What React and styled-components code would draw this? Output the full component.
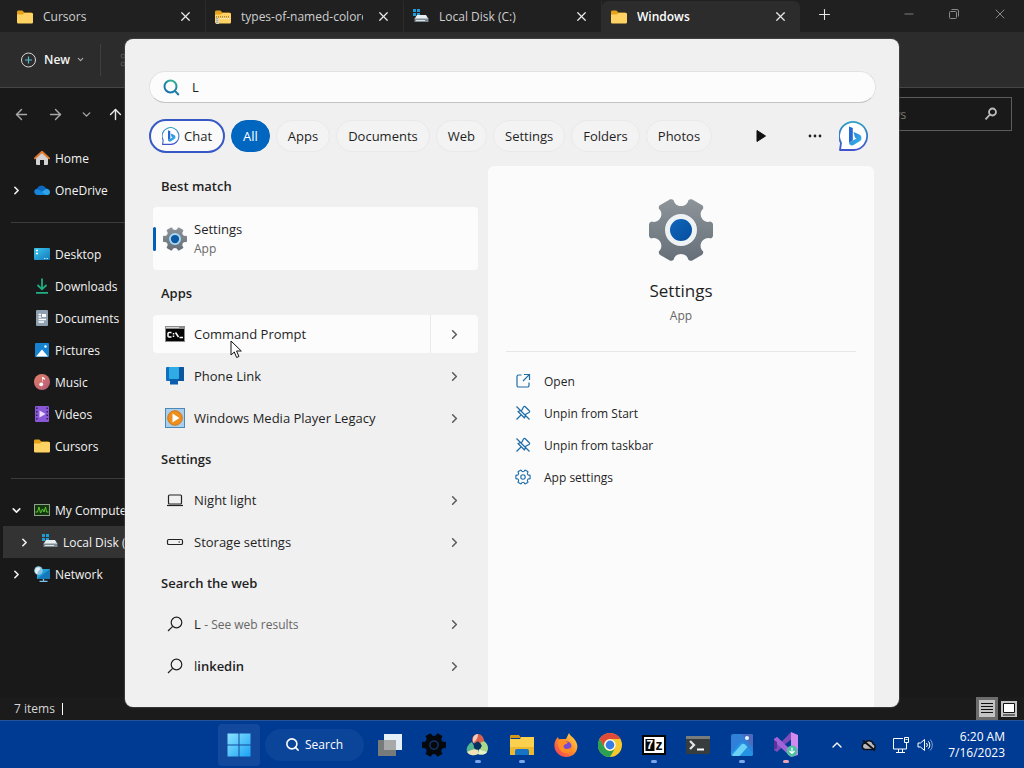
import React from 'react'
import styled, { createGlobalStyle } from 'styled-components'
import { ArrowLeft, ArrowRight, ArrowUp, ChevronDown, ChevronRight, ChevronUp, Minus, Plus, Scissors, Search, X } from 'lucide-react'


const GlobalStyle = createGlobalStyle`
    * {
        box-sizing: border-box;
    }

    body {
        margin: 0;
        background: #191919;
        font-family: 'Open Sans', 'Noto Sans', sans-serif;
        font-size: 12px;
    }

    button, input {
        font: inherit;
        color: inherit;
        border: none;
        background: none;
        padding: 0;
    }

    svg {
        display: block;
        flex-shrink: 0;
    }
`

const Desktop = styled.div`
    position: relative;
    min-height: 100vh;
    display: flex;
    flex-direction: column;
    overflow: hidden;
`

/* ---------- explorer window ---------- */

const Explorer = styled.div`
    flex: 1;
    display: flex;
    flex-direction: column;
    background: #191919;
    color: #e8e8e8;
`

const TabStrip = styled.div`
    height: 32px;
    display: flex;
    align-items: flex-start;
    padding-left: 8px;
    background: #202020;
`

const Tab = styled.div`
    width: 198px;
    height: 31px;
    margin-top: 1px;
    display: flex;
    align-items: center;
    gap: 10px;
    padding: 0 10px 0 9px;
    border-right: ${({ $active }) => ($active ? 'none' : '1px solid #2b2b2b')};
    border-radius: ${({ $active }) => ($active ? '6px 6px 0 0' : '0')};
    background: ${({ $active }) => ($active ? '#2c2c2c' : 'transparent')};
    color: ${({ $active }) => ($active ? '#ffffff' : '#cfcfcf')};
    font-weight: ${({ $active }) => ($active ? 600 : 400)};
`

const TabLabel = styled.button`
    flex: 1;
    min-width: 0;
    overflow: hidden;
    white-space: nowrap;
    text-align: left;
`

const IconButton = styled.button`
    width: ${({ $width }) => $width || 20}px;
    height: 28px;
    display: flex;
    align-items: center;
    justify-content: center;
    color: ${({ $color }) => $color || '#e8e8e8'};
`

const WindowControls = styled.div`
    display: flex;
    margin-left: auto;
`

const Toolbar = styled.div`
    height: 56px;
    display: flex;
    align-items: center;
    padding-left: 20px;
    background: #2c2c2c;
    border-bottom: 1px solid #454545;
`

const NewButton = styled.button`
    display: flex;
    align-items: center;
    gap: 6px;
    color: #f5f5f5;
    font-weight: 600;
`

const ToolDivider = styled.div`
    width: 1px;
    height: 32px;
    margin: 0 18px 0 15px;
    background: #3f3f3f;
`

const NavRow = styled.div`
    height: 52px;
    display: flex;
    align-items: center;
    gap: 8px;
    padding: 0 12px 0 8px;
`

const FolderSearch = styled.label`
    width: 216px;
    height: 34px;
    margin-left: auto;
    display: flex;
    align-items: center;
    padding: 0 13px 0 17px;
    border: 1px solid #5c5c5c;

    input {
        flex: 1;
        min-width: 0;
        outline: none;
    }

    input::placeholder {
        color: #7a7a7a;
        opacity: 1;
    }
`

const Body = styled.div`
    flex: 1;
`

const Sidebar = styled.nav`
    width: 196px;
    padding: 2px 3px;
`

const TreeItem = styled.button`
    width: 100%;
    height: 32px;
    display: flex;
    align-items: center;
    padding-left: ${({ $nested }) => ($nested ? 12 : 4)}px;
    background: ${({ $selected }) => ($selected ? '#333333' : 'transparent')};
    color: #f2f2f2;
    white-space: nowrap;
`

const TreeArrow = styled.span`
    width: 27px;
    padding-left: 3px;
    flex-shrink: 0;
`

const TreeIcon = styled.span`
    margin-right: 5px;
`

const TreeDivider = styled.hr`
    margin: 16px 0 15px 8px;
    border: none;
    border-top: 1px solid #3c3c3c;
`

const StatusBar = styled.div`
    height: 23px;
    display: flex;
    align-items: center;
    padding: 0 4px 0 14px;
    background: #1b1b1b;
    color: #d6d6d6;
`

const StatusDivider = styled.div`
    width: 1px;
    height: 12px;
    margin: 0 auto 0 7px;
    background: #ffffff;
`

const ViewButton = styled.button`
    width: 22px;
    height: 23px;
    display: flex;
    align-items: center;
    justify-content: center;
    background: ${({ $active }) => ($active ? '#6c6c6c' : 'transparent')};
`

/* ---------- start search panel ---------- */

const Panel = styled.section`
    position: absolute;
    top: 39px;
    bottom: 61px;
    left: 50%;
    width: min(774px, calc(100% - 24px));
    transform: translateX(-50%);
    display: flex;
    flex-direction: column;
    padding: 32px 25px 0 24px;
    border-radius: 8px;
    background: #f0f0f0;
    color: #1f1f1f;
    overflow: hidden;
    box-shadow: 0 0 1px 1px rgba(80, 80, 80, 0.6);
`

const SearchBox = styled.label`
    height: 32px;
    flex-shrink: 0;
    display: flex;
    align-items: center;
    gap: 12px;
    margin-right: -2px;
    padding: 0 13px;
    border: 1px solid #e2e2e2;
    border-bottom-color: #c4c4c4;
    border-radius: 16px;
    background: #fcfcfc;
    font-size: 13px;

    input {
        flex: 1;
        outline: none;
    }
`

const Filters = styled.div`
    display: flex;
    align-items: center;
    gap: 6px;
    margin-top: 16px;
`

const Pill = styled.button`
    height: 32px;
    padding: 0 11px;
    border: 1px solid #e9e9e9;
    border-radius: 16px;
    background: #f3f3f3;
    font-size: 13px;
`

const ActivePill = styled(Pill)`
    border-color: #0066bf;
    background: #0066bf;
    color: #ffffff;
`

const ChatPill = styled(Pill)`
    height: 34px;
    display: flex;
    align-items: center;
    gap: 4px;
    border: 2px solid #3759c5;
    border-radius: 17px;
    background: #fafafa;
`

const FilterTools = styled.div`
    display: flex;
    align-items: center;
    margin-left: auto;
    padding-right: 3px;
`

const Results = styled.div`
    flex: 1;
    display: grid;
    grid-template-columns: 325fr 386fr;
    gap: 10px;
    margin-top: 13px;
    padding-left: 4px;
`

const Column = styled.div`
    min-width: 0;
`

const Heading = styled.h2`
    height: 40px;
    margin: 0;
    padding-left: 8px;
    font-size: 13px;
    font-weight: 600;
    line-height: 40px;
`

const BestMatch = styled.button`
    width: 100%;
    height: 63px;
    margin: 1px 0 3px;
    display: flex;
    align-items: center;
    border-radius: 4px;
    background: #fcfcfc;
    text-align: left;
`

const Accent = styled.span`
    width: 3px;
    height: 24px;
    margin-right: 7px;
    border-radius: 2px;
    background: #005fb8;
`

const BestText = styled.span`
    display: flex;
    flex-direction: column;
    margin-left: 7px;
    font-size: 13px;
    line-height: 20px;
`

const Muted = styled.span`
    color: #666666;
    font-size: 12px;
`

const Row = styled.div`
    height: 38px;
    margin: 2px 0;
    display: flex;
    border-radius: 4px;
    background: ${({ $hover }) => ($hover ? '#fcfcfc' : 'transparent')};

    & + & {
        margin-top: 4px;
    }
`

const RowMain = styled.button`
    flex: 1;
    display: flex;
    align-items: center;
    gap: 9px;
    padding-left: 12px;
    font-size: 13px;
    text-align: left;
    white-space: nowrap;

    b {
        font-weight: 600;
    }
`

const RowMore = styled.button`
    width: 48px;
    display: flex;
    align-items: center;
    justify-content: center;
    border-left: 1px solid ${({ $hover }) => ($hover ? '#e9e9e9' : 'transparent')};
    color: #5c5c5c;
`

const Preview = styled(Column)`
    padding: 32px 18px 0;
    border-radius: 6px 6px 0 0;
    background: #fbfbfb;
    text-align: center;
`

const PreviewTitle = styled.h1`
    margin: 16px 0 1px;
    font-size: 17px;
    font-weight: 400;
    line-height: 26px;
`

const PreviewHead = styled.div`
    height: 154px;
    display: flex;
    flex-direction: column;
    align-items: center;
    border-bottom: 1px solid #e6e6e6;
    line-height: 22px;
`

const Actions = styled.div`
    padding-top: 13px;
`

const Action = styled.button`
    width: 100%;
    height: 32px;
    display: flex;
    align-items: center;
    gap: 13px;
    padding-left: 9px;
    color: #1f1f1f;

    svg {
        color: #1c6ca8;
    }
`

const Pointer = styled.svg`
    position: absolute;
    left: 230px;
    top: 340px;
`

/* ---------- taskbar ---------- */

const Taskbar = styled.footer`
    height: 48px;
    display: grid;
    grid-template-columns: 1fr auto 1fr;
    align-items: center;
    border-top: 1px solid #26549b;
    background: #003b93;
    color: #ffffff;
`

const TaskItems = styled.div`
    grid-column: 2;
    display: flex;
    align-items: center;
`

const TaskButton = styled.button`
    position: relative;
    width: 44px;
    height: 47px;
    display: flex;
    align-items: center;
    justify-content: center;

    &::after {
        content: '';
        position: absolute;
        bottom: 5px;
        width: 6px;
        height: 3px;
        border-radius: 2px;
        background: ${({ $mark }) => $mark || 'transparent'};
    }
`

const StartButton = styled.button`
    width: 42px;
    height: 42px;
    margin: 0 1px;
    display: flex;
    align-items: center;
    justify-content: center;
    border-radius: 4px;
    background: #12499c;
`

const TaskSearch = styled.button`
    width: 99px;
    height: 32px;
    margin: 0 4px;
    display: flex;
    align-items: center;
    justify-content: center;
    gap: 5px;
    border-radius: 16px;
    background: #0b459a;
`

const Tray = styled.div`
    display: flex;
    align-items: center;
    justify-content: flex-end;
    padding-right: 19px;
`

const TrayButton = styled.button`
    width: ${({ $width }) => $width || 32}px;
    display: flex;
    justify-content: center;
`

const Clock = styled.button`
    margin-left: 15px;
    text-align: right;
    line-height: 16px;
`


// six-toothed gear around (32, 32)
const gearPath = () => {
    const points = [[29.5, -8.5], [31.5, -8], [32, -6], [32, 6], [31.5, 8], [29.5, 8.5], [22, 6], [16, 16]]
    const teeth = [0, 60, 120, 180, 240, 300].map((deg) => {
        const a = (deg * Math.PI) / 180
        return points.map(([x, y]) => [
            (32 + x * Math.cos(a) - y * Math.sin(a)).toFixed(2),
            (32 + x * Math.sin(a) + y * Math.cos(a)).toFixed(2),
        ].join(' '))
    })
    return teeth.map((p, i) => {
        const next = teeth[(i + 1) % 6][0]
        return `${i === 0 ? `M${p[0]}` : ''}Q${p[1]} ${p[2]}L${p[3]}Q${p[4]} ${p[5]}C${p[6]} ${p[7]} ${next}`
    }).join('') + 'Z'
}

const GearIcon = ({ size }) => (
    <svg width={size} height={size} viewBox="0 0 64 64">
        <defs>
            <linearGradient id="gear" x1="0" y1="0" x2="0" y2="1">
                <stop offset="0" stopColor="#8d949a" />
                <stop offset="1" stopColor="#666f78" />
            </linearGradient>
            <linearGradient id="hub" x1="0" y1="0" x2="1" y2="1">
                <stop offset="0" stopColor="#0f69bd" />
                <stop offset="1" stopColor="#064b9c" />
            </linearGradient>
        </defs>
        <path d={gearPath()} fill="url(#gear)" />
        <circle cx="32" cy="32" r="13.5" fill={size > 30 ? 'url(#hub)' : '#0c58a3'} stroke={size > 30 ? '#eef2f5' : '#a9d8f5'} strokeWidth="5" />
    </svg>
)

const GearLine = () => (
    <svg width="16" height="16" viewBox="-4 -4 72 72" fill="none" stroke="currentColor" strokeWidth="5">
        <path d={gearPath()} />
        <circle cx="32" cy="32" r="10" />
    </svg>
)

const FolderIcon = ({ zip }) => (
    <svg width="16" height="16" viewBox="0 0 16 16">
        <path d="M0 3a1.4 1.4 0 0 1 1.4-1.4h4L7.3 3.4H14A1.5 1.5 0 0 1 15.5 5v4H0z" fill="#e3a21a" />
        <path d="M0 5.6h5.8l1.8-1.5H15a1 1 0 0 1 1 1v8.2a1.2 1.2 0 0 1-1.2 1.2H1.2A1.2 1.2 0 0 1 0 13.3z" fill="#ffd363" />
        {zip && (
            <>
                <path d="M1 8h14" stroke="#9a6d22" strokeWidth="1.5" strokeDasharray="1 1" />
                <path d="M1 9.5h14" stroke="#f5f1e4" strokeWidth="1.5" strokeDasharray="1 1" />
                <path d="M1 9h3v6H1z" fill="#d7d1bd" />
                <path d="M2 9v6" stroke="#777" strokeDasharray="1 1" />
            </>
        )}
    </svg>
)

const DiskIcon = () => (
    <svg width="16" height="16" viewBox="0 0 16 16">
        <path d="M0 0h3v3H0zM4 0h3v3H4zM0 4h3v3H0zM4 4h3v3H4z" fill="#1e9ad6" />
        <path d="M4 6h9l2.500 4H1.500z" fill="#e8edf0" />
        <path d="M1.500 9.500H15.500V13H1.500z" fill="#7f8b92" />
        <path d="M3 11.500h9" stroke="#d9e0e4" />
    </svg>
)

const HomeIcon = () => (
    <svg width="16" height="16" viewBox="0 0 16 16">
        <path d="M2 7.500 8 2.500l6 5V14a1 1 0 0 1-1 1h-3v-5H6v5H3a1 1 0 0 1-1-1z" fill="#d3d3d5" />
        <path d="M1 8.300 8 1.800l7 6.500" fill="none" stroke="#e0792f" strokeWidth="2" strokeLinecap="round" strokeLinejoin="round" />
    </svg>
)

const OneDriveIcon = () => (
    <svg width="16" height="16" viewBox="0 0 16 16">
        <path d="M3.300 13A3.300 3.300 0 0 1 3.200 6.500 4.900 4.900 0 0 1 12 6.200a3.500 3.500 0 0 1 .8 6.800z" fill="#0d68c0" />
        <path d="M3.300 13 11.500 7.300A3.200 3.200 0 0 1 16 10.100 2.900 2.900 0 0 1 13 13z" fill="#2ea3ea" />
        <path d="M3.300 13A3.300 3.300 0 0 1 1 7.800l2.800-.7L12 13z" fill="#1687db" />
    </svg>
)

const DesktopIcon = () => (
    <svg width="16" height="16" viewBox="0 0 16 16">
        <defs>
            <linearGradient id="desk" x2="1" y2="1">
                <stop offset="0" stopColor="#3cc8ee" />
                <stop offset="1" stopColor="#1378bb" />
            </linearGradient>
        </defs>
        <rect y="2" width="16" height="12" rx="1" fill="url(#desk)" />
        <path d="M2 4.500h2M2 7.500h2" stroke="#fff" strokeWidth="1.5" />
        <path d="M10 12.500h1.500M12.500 12.500H14" stroke="#a9e5f8" />
    </svg>
)

const DownloadIcon = () => (
    <svg width="16" height="16" viewBox="0 0 16 16" fill="none" stroke="#20ae83" strokeWidth="1.8">
        <path d="M8 .5v10.500M3.500 7 8 11.300 12.500 7M2 14.800h12" />
    </svg>
)

const DocumentIcon = () => (
    <svg width="16" height="16" viewBox="0 0 16 16">
        <rect x="2" width="12" height="16" rx="1" fill="#8fa0b1" />
        <path d="M4.500 4.500H7M4.500 7H7" stroke="#fff" strokeWidth="1.3" />
        <path d="M8 4h4v3H8z" fill="#fff" />
        <path d="M4.500 9.500H12M4.500 12H10" stroke="#fff" strokeWidth="1.3" />
    </svg>
)

const PictureIcon = () => (
    <svg width="16" height="16" viewBox="0 0 16 16">
        <rect x="1" y="1" width="14" height="14" rx="1" fill="#1583d2" />
        <path d="m2 14.500 6-7 6 7z" fill="#fff" />
        <circle cx="11.5" cy="4.5" r="1.2" fill="#fff" />
    </svg>
)

const MusicIcon = () => (
    <svg width="16" height="16" viewBox="0 0 16 16">
        <defs>
            <linearGradient id="music" y1="0" x2="1" y2="1">
                <stop offset="0" stopColor="#e58368" />
                <stop offset="1" stopColor="#b15879" />
            </linearGradient>
        </defs>
        <circle cx="8" cy="8" r="8" fill="url(#music)" />
        <path d="M8 3h1l2 1.500v1.300L9 5v5z" fill="#fff" />
        <circle cx="7.2" cy="10.3" r="1.9" fill="#fff" />
    </svg>
)

const VideoIcon = () => (
    <svg width="16" height="16" viewBox="0 0 16 16">
        <rect x="1" width="14" height="16" rx="1" fill="#8a58d6" />
        <path d="M2.800 1.500v13M13.200 1.500v13" stroke="#351d70" strokeWidth="1.5" strokeDasharray="1.5 2" />
        <path d="m5.500 4.500 6 3.500-6 3.500z" fill="#e8dcff" />
    </svg>
)

const ComputerIcon = () => (
    <svg width="16" height="16" viewBox="0 0 16 16" fill="none">
        <rect x=".5" y="2.5" width="15" height="11" fill="#13370f" stroke="#8fa08a" />
        <path d="M1.500 10h2l1.500-5 1.500 6 2-4 1.500 3 1.500-5 1 5h2" stroke="#5fc536" />
    </svg>
)

const NetworkIcon = () => (
    <svg width="16" height="16" viewBox="0 0 16 16">
        <path d="M3 3h13v10H3z" fill="#22a0dc" />
        <path d="m3 13 13-10v10z" fill="#1478b9" />
        <path d="M9.500 13V15M5.500 15.300h8" stroke="#7ec1e6" strokeWidth="1.3" />
        <circle cx="4.5" cy="4.500" r="4.3" fill="#8cc4e0" />
        <path d="M1.500 2.500 5 1l1.500 2L4 5.500 3 8.500 1 6z" fill="#e0eef5" />
    </svg>
)

const CmdIcon = () => (
    <svg width="20" height="20" viewBox="0 0 20 20">
        <path d="M0 2h20v16H0z" fill="#8c8c8c" />
        <path d="M1 5h18v12H1z" fill="#050505" />
        <path d="M1 3.500h13" stroke="#d6d6d6" />
        <path d="M6.500 8.500H4a1 1 0 0 0-1 1v2.500a1 1 0 0 0 1 1h2.500M8.500 9v1.500M8.500 11.500V13M10.500 8.500l3 4.500M14.500 13.500h3.500" fill="none" stroke="#fff" strokeWidth="1.5" />
    </svg>
)

const PhoneLinkIcon = () => (
    <svg width="20" height="20" viewBox="0 0 20 20">
        <rect x="1" y="1" width="18" height="14" rx="1" fill="#0f70bf" />
        <path d="m15 1 3 0a1 1 0 0 1 1 1v13H9z" fill="#0b579f" />
        <rect x="4" y="1" width="10" height="12" rx="1" fill="#2fabe6" />
        <path d="M5 13h8v5.500H5z" fill="#0b5eae" />
    </svg>
)

const MediaIcon = () => (
    <svg width="20" height="20" viewBox="0 0 20 20">
        <rect x=".5" y=".5" width="19" height="19" fill="#a8d0ee" stroke="#5088b5" />
        <circle cx="10" cy="10" r="7.3" fill="#ee8e1c" stroke="#d3781a" />
        <path d="M7.500 5.500 14.500 10l-7 4.500z" fill="#fff" />
    </svg>
)

const LaptopIcon = () => (
    <svg width="20" height="20" viewBox="0 0 20 20" fill="none" stroke="#222" strokeWidth="1.2">
        <rect x="3.5" y="5" width="13" height="9" rx="1" />
        <path d="M2 15.500h16" />
    </svg>
)

const StorageIcon = () => (
    <svg width="20" height="20" viewBox="0 0 20 20" fill="none" stroke="#222" strokeWidth="1.2">
        <rect x="2.5" y="7.500" width="15" height="5" rx="1.3" />
        <path d="M13.500 10H15" />
    </svg>
)

const WebSearchIcon = () => (
    <svg width="20" height="20" viewBox="0 0 20 20" fill="none" stroke="#222" strokeWidth="1.2">
        <circle cx="11.5" cy="8.500" r="5.3" />
        <path d="m7.700 12.300-4.700 4.700" />
    </svg>
)

const SearchGlyph = () => (
    <svg width="17" height="17" viewBox="0 0 17 17" fill="none" stroke="url(#lens)" strokeWidth="2">
        <defs>
            <linearGradient id="lens" gradientUnits="userSpaceOnUse" x1="13" y1="0" x2="5" y2="16">
                <stop offset="0" stopColor="#45c98c" />
                <stop offset=".4" stopColor="#1d8f9f" />
                <stop offset="1" stopColor="#1b67b2" />
            </linearGradient>
        </defs>
        <circle cx="7.5" cy="7.500" r="6" />
        <path d="m11.800 11.800 4 4.200" />
    </svg>
)

const BingIcon = ({ size }) => (
    <svg width={size} height={size} viewBox="0 0 30 30">
        <defs>
            <linearGradient id="bingRing" x1="0" y1="0" x2="0" y2="1">
                <stop offset="0" stopColor="#2e9fc4" />
                <stop offset="1" stopColor="#4252ce" />
            </linearGradient>
            <linearGradient id="bingB" x1="0" y1="0" x2="1" y2="1">
                <stop offset="0" stopColor="#2b76dd" />
                <stop offset="1" stopColor="#37bde8" />
            </linearGradient>
        </defs>
        <path d="M1 29 2 22A14 14 0 1 1 15 29z" fill="#fff" stroke="url(#bingRing)" strokeWidth="1.8" strokeLinejoin="round" />
        <path d="m10 5.500 3.800 1.600v12.500l-3.800 2.100z" fill="#2468d5" />
        <path d="m14.500 11 5.800 2.500a3.800 3.800 0 0 1 .4 6.700l-5.700 3.600a3 3 0 0 1-5-2.100l7.500-4.200-1.500-.8z" fill="url(#bingB)" />
    </svg>
)

const OpenIcon = () => (
    <svg width="16" height="16" viewBox="0 0 16 16" fill="none" stroke="currentColor" strokeWidth="1.2">
        <path d="M6.500 2h-3A1.500 1.500 0 0 0 2 3.500v9A1.500 1.500 0 0 0 3.500 14h9a1.500 1.500 0 0 0 1.500-1.500v-3M9 1.500h5.500V7M14.300 1.700 8 8" />
    </svg>
)

const UnpinIcon = () => (
    <svg width="16" height="16" viewBox="0 0 16 16" fill="none" stroke="currentColor" strokeWidth="1.2" strokeLinejoin="round">
        <path d="M10 1.500 14.500 6q.5 1-.5 1.500l-3 1.500-1.500 4-6.500-6.500 4-1.500L8.500 2q.7-1 1.500-.5zM6 10l-4.500 4.500M1.500 1.500l13 13" />
    </svg>
)

const RestoreIcon = () => (
    <svg width="10" height="10" viewBox="0 0 10 10" fill="none" stroke="currentColor">
        <rect x=".5" y="2.5" width="7" height="7" rx="1" />
        <path d="M2.500.5H8A1.500 1.500 0 0 1 9.500 2v5.500" />
    </svg>
)

const ExplorerSearchIcon = () => (
    <svg width="14" height="14" viewBox="0 0 14 14" fill="none" stroke="#bdbdbd" strokeWidth="1.8">
        <circle cx="8.5" cy="5" r="3.5" />
        <path d="m6 7.500-4.500 4.800" />
    </svg>
)

const ListViewIcon = () => (
    <svg width="16" height="17" viewBox="0 0 16 17">
        <path d="M0 0h16v17H0z" fill="#c4c4c4" />
        <path d="M2 3.500h12M2 6.500h12M2 9.500h12M2 12.500h12" stroke="#111" />
    </svg>
)

const LargeViewIcon = () => (
    <svg width="16" height="16" viewBox="0 0 16 16">
        <path d="M0 0h16v16H0z" fill="#c4c4c4" />
        <path d="M2.500 2.500h11v9h-11z" fill="#fff" stroke="#111" />
        <path d="M2 14h12" stroke="#111" />
    </svg>
)

const WindowsLogo = () => (
    <svg width="24" height="24" viewBox="0 0 24 24">
        <defs>
            <linearGradient id="win" gradientUnits="userSpaceOnUse" x1="0" y1="0" x2="24" y2="24">
                <stop offset="0" stopColor="#8ee4ff" />
                <stop offset="1" stopColor="#17a1f4" />
            </linearGradient>
        </defs>
        <path d="M.5.500h11v11H.5zM12.500.500h11v11h-11zM.5 12.500h11v11H.5zM12.500 12.500h11v11h-11z" fill="url(#win)" />
    </svg>
)

const TaskViewIcon = () => (
    <svg width="24" height="24" viewBox="0 0 24 24">
        <path d="M6 1h18v16H6z" fill="#e4eff7" />
        <path d="M0 7h18v16H0z" fill="#777b7a" />
        <path d="M6 7h12v10H6z" fill="#a7aaa9" />
    </svg>
)

const BlackGearIcon = () => (
    <svg width="24" height="24" viewBox="0 0 64 64">
        <path d={gearPath()} fill="#05080d" />
        <circle cx="32" cy="32" r="11" fill="none" stroke="#123463" strokeWidth="4" />
    </svg>
)

const PaintIcon = () => (
    <svg width="24" height="24" viewBox="0 0 24 24">
        <path d="M6 8c0-5 3-7 6-7s6 3 6 7l-4 3-2-3-3 3z" fill="#d9604c" />
        <path d="M7 5c1-3 3-4 5-4 0 3-1 6-5 9z" fill="#f0cdbc" />
        <path d="M18 8c4 3 5 7 3 11-2 3-6 3-9 2l1-5 3-3-2-3z" fill="#a9d98b" />
        <path d="M21 19c-2 3-6 3-9 2l1-5c3 2 6 2 8 3z" fill="#e8f2c9" />
        <path d="M6 9c-4 2-6 6-5 10 3 4 7 4 11 2v-5l-4-3z" fill="#57b592" />
        <path d="M1 19c3 4 7 4 11 2v-5c-4 0-8 1-11 3z" fill="#f0e2b5" />
        <circle cx="11.5" cy="13" r="3.7" fill="#07305e" />
    </svg>
)

const ExplorerIcon = () => (
    <svg width="24" height="24" viewBox="0 0 24 24">
        <path d="M0 3a1 1 0 0 1 1-1h8l2 3H1L0 8z" fill="#d49415" />
        <path d="M0 6h10l1-2h13v18H0z" fill="#fbd04f" />
        <path d="M0 14h24v8H0z" fill="#efb92f" />
        <path d="M5 22v-4a2 2 0 0 1 2-2h10a2 2 0 0 1 2 2v4z" fill="#1673c6" />
    </svg>
)

const FirefoxIcon = () => (
    <svg width="24" height="24" viewBox="0 0 24 24">
        <defs>
            <linearGradient id="fox" x1="1" y1="0" x2="0" y2="1">
                <stop offset="0" stopColor="#ffe04a" />
                <stop offset=".5" stopColor="#ff8a2a" />
                <stop offset="1" stopColor="#ef3263" />
            </linearGradient>
        </defs>
        <path d="M15 0c1 3 4 4 6 7 2 3 3 6 2 9-1 5-6 8-11 8S1 20 .5 14C0 9 2 6 4 4l1 3c1-1 3-1 4-1l3 0c1-2 2-4 3-6z" fill="url(#fox)" />
        <circle cx="12" cy="13.5" r="5.5" fill="#7a4bd0" />
        <path d="M4 7c2-2 5-1 7 1l3 1c-1 2-3 2-4 3-1 2 0 4 3 4 2 0 4-1 5-3 1 5-3 8-7 7-5-1-8-7-7-13z" fill="#ff8e25" />
    </svg>
)

const ChromeIcon = () => (
    <svg width="24" height="24" viewBox="0 0 24 24">
        <circle cx="12" cy="12" r="12" fill="#f7c92d" />
        <path d="M1.600 6A12 12 0 0 1 22.400 6H12a6 6 0 0 0-5.200 9z" fill="#e04a3a" />
        <path d="M1.600 6A12 12 0 0 0 12 24l5.200-9A6 6 0 0 1 6.800 15z" fill="#2ca152" />
        <circle cx="12" cy="12" r="5.7" fill="#fff" />
        <circle cx="12" cy="12" r="4.4" fill="#377be5" />
    </svg>
)

const SevenZipIcon = () => (
    <svg width="24" height="24" viewBox="0 0 24 24">
        <path d="M0 2h24v20H0z" fill="#050505" />
        <path d="M2 4h20v16H2z" fill="#fff" />
        <path d="M3.500 6h9v12h-9z" fill="#050505" />
        <text x="4.5" y="16" fill="#fff" fontFamily="Liberation Sans, sans-serif" fontWeight="700" fontSize="12">7</text>
        <text x="13.5" y="17" fill="#050505" fontFamily="Liberation Sans, sans-serif" fontWeight="700" fontSize="14">z</text>
    </svg>
)

const TerminalIcon = () => (
    <svg width="24" height="24" viewBox="0 0 24 24">
        <rect y="3" width="24" height="18" rx="1" fill="#373c3f" />
        <path d="M0 3h24v3H0z" fill="#777c7d" />
        <path d="m4 8 4 4-4 4" fill="none" stroke="#e5e5e5" strokeWidth="2.2" />
        <path d="M11 16.500h7" stroke="#fff" strokeWidth="2" />
    </svg>
)

const PhotosIcon = () => (
    <svg width="24" height="24" viewBox="0 0 24 24">
        <rect x="1" y="1" width="22" height="22" rx="2" fill="#2f80d6" />
        <path d="M12 1h9a2 2 0 0 1 2 2v12z" fill="#4d69bd" />
        <path d="m1 20 9-10a2.500 2.500 0 0 1 4 0l9 10v1a2 2 0 0 1-2 2H3a2 2 0 0 1-2-2z" fill="#2493e4" />
        <path d="M2 22 11.500 11.500a2.500 2.500 0 0 1 3.500 0l2.500 2.500-8 9H3z" fill="#6bd1f6" />
        <circle cx="17" cy="5" r="2" fill="#e8f4ff" />
    </svg>
)

const VisualStudioIcon = () => (
    <svg width="26" height="26" viewBox="0 0 26 26">
        <path d="M1 7l3-2 5 4.500L18 0v7.500l-7 5.500L4 20l-3-2z" fill="#7f4dbb" />
        <path d="M1 7l3-2 14 13v7L4 12v3l-3 3z" fill="#a263d8" />
        <path d="M1 8l3 2v6l-3 2z" fill="#5b3296" />
        <path d="m18 0 7 3v20l-7 2z" fill="#d08bec" />
        <circle cx="19" cy="19" r="5.5" fill="#4cc1a4" />
        <path d="M19 15.500v6M16.500 19l2.500 2.500 2.500-2.500" fill="none" stroke="#fff" strokeWidth="1.2" />
    </svg>
)

const CloudOffIcon = () => (
    <svg width="16" height="16" viewBox="0 0 16 16">
        <path d="M4 12.500A3.300 3.300 0 0 1 4 6a4.500 4.500 0 0 1 8.300 1A2.900 2.900 0 0 1 12 12.500z" fill="#bbb9bd" stroke="#0b111c" strokeWidth="1.5" />
        <path d="m2 3.500 12 10" stroke="#111" strokeWidth="1.8" />
    </svg>
)

const MonitorIcon = () => (
    <svg width="16" height="16" viewBox="0 0 16 16" fill="none" stroke="#fff">
        <path d="M10 1.500H.500v10.500h13V9M3 15.500h9M5.500 12v3.500M9.500 12v3.500" />
        <path d="M11.500.500h4v5h-4zM13.500 5.500V9M12.500 2.500h2" />
    </svg>
)

const SpeakerIcon = () => (
    <svg width="16" height="16" viewBox="0 0 16 16" fill="none" stroke="#fff">
        <path d="M1 6h2.500L7.500 2.500v11L3.500 10H1zM9.500 6a3 3 0 0 1 0 4M11.300 4.300a5.300 5.300 0 0 1 0 7.400" />
        <path d="M13.200 2.500a8 8 0 0 1 0 11" stroke="#7f9fcb" />
    </svg>
)


const tabs = [
    { title: 'Cursors', icon: <FolderIcon /> },
    { title: 'types-of-named-colored', icon: <FolderIcon zip /> },
    { title: 'Local Disk (C:)', icon: <DiskIcon /> },
    { title: 'Windows', icon: <FolderIcon />, active: true },
]

const quickAccess = [
    { title: 'Desktop', icon: <DesktopIcon /> },
    { title: 'Downloads', icon: <DownloadIcon /> },
    { title: 'Documents', icon: <DocumentIcon /> },
    { title: 'Pictures', icon: <PictureIcon /> },
    { title: 'Music', icon: <MusicIcon /> },
    { title: 'Videos', icon: <VideoIcon /> },
    { title: 'Cursors', icon: <FolderIcon /> },
]

const filters = ['Apps', 'Documents', 'Web', 'Settings', 'Folders', 'Photos']

const groups = [
    {
        title: 'Apps',
        rows: [
            { title: 'Command Prompt', icon: <CmdIcon />, hover: true },
            { title: 'Phone Link', icon: <PhoneLinkIcon /> },
            { title: 'Windows Media Player Legacy', icon: <MediaIcon /> },
        ],
    },
    {
        title: 'Settings',
        rows: [
            { title: 'Night light', icon: <LaptopIcon /> },
            { title: 'Storage settings', icon: <StorageIcon /> },
        ],
    },
    {
        title: 'Search the web',
        rows: [
            { title: 'L', label: <>L <Muted>- See web results</Muted></>, icon: <WebSearchIcon /> },
            { title: 'linkedin', label: <>l<b>inkedin</b></>, icon: <WebSearchIcon /> },
        ],
    },
]

const actions = [
    { title: 'Open', icon: <OpenIcon /> },
    { title: 'Unpin from Start', icon: <UnpinIcon /> },
    { title: 'Unpin from taskbar', icon: <UnpinIcon /> },
    { title: 'App settings', icon: <GearLine /> },
]

const taskApps = [
    { title: 'Task view', icon: <TaskViewIcon /> },
    { title: 'Options', icon: <BlackGearIcon /> },
    { title: 'Color picker', icon: <PaintIcon />, mark: '#7aa7ea' },
    { title: 'File Explorer', icon: <ExplorerIcon />, mark: '#7aa7ea' },
    { title: 'Firefox', icon: <FirefoxIcon /> },
    { title: 'Chrome', icon: <ChromeIcon /> },
    { title: '7-Zip', icon: <SevenZipIcon />, mark: '#7aa7ea' },
    { title: 'Terminal', icon: <TerminalIcon /> },
    { title: 'Photos', icon: <PhotosIcon />, mark: '#7aa7ea' },
    { title: 'Visual Studio Installer', icon: <VisualStudioIcon />, mark: '#eba4b4' },
]


const TreeRow = ({ title, icon, arrow, nested, selected }) => (
    <TreeItem $nested={nested} $selected={selected}>
        <TreeArrow>
            {arrow === 'right' && <ChevronRight size={13} strokeWidth={3} />}
            {arrow === 'down' && <ChevronDown size={13} strokeWidth={3} />}
        </TreeArrow>
        <TreeIcon>{icon}</TreeIcon>
        {title}
    </TreeItem>
)

const ExplorerWindow = () => (
    <Explorer>
        <TabStrip>
            {tabs.map(({ title, icon, active }) => (
                <Tab key={title} $active={active}>
                    {icon}
                    <TabLabel>{title}</TabLabel>
                    <IconButton aria-label={`Close ${title}`}><X size={15} strokeWidth={2} /></IconButton>
                </Tab>
            ))}
            <IconButton $width={48} aria-label="New tab"><Plus size={17} strokeWidth={1.5} /></IconButton>
            <WindowControls>
                <IconButton $width={45} $color="#8a8a8a" aria-label="Minimize"><Minus size={14} strokeWidth={1.5} /></IconButton>
                <IconButton $width={45} $color="#8a8a8a" aria-label="Restore"><RestoreIcon /></IconButton>
                <IconButton $width={48} $color="#8a8a8a" aria-label="Close"><X size={16} strokeWidth={1.5} /></IconButton>
            </WindowControls>
        </TabStrip>
        <Toolbar>
            <NewButton>
                <svg width="18" height="18" viewBox="0 0 18 18" fill="none">
                    <circle cx="8.500" cy="9" r="7" stroke="#d8d8d8" />
                    <path d="M8.500 5.500v7M5 9h7" stroke="#56b8cf" strokeWidth="1.2" />
                </svg>
                New
                <ChevronDown size={9} color="#b0b0b0" strokeWidth={3} />
            </NewButton>
            <ToolDivider />
            <Scissors size={16} color="#565656" strokeWidth={1.5} />
        </Toolbar>
        <NavRow>
            <IconButton $width={26} $color="#a8a8a8" aria-label="Back"><ArrowLeft size={17} /></IconButton>
            <IconButton $width={26} $color="#a8a8a8" aria-label="Forward"><ArrowRight size={17} /></IconButton>
            <IconButton $width={20} $color="#a8a8a8" aria-label="Recent"><ChevronDown size={13} strokeWidth={2.5} /></IconButton>
            <IconButton $width={22} aria-label="Up"><ArrowUp size={17} /></IconButton>
            <FolderSearch>
                <input type="text" placeholder="Search Windows" aria-label="Search Windows" />
                <ExplorerSearchIcon />
            </FolderSearch>
        </NavRow>
        <Body>
            <Sidebar>
                <TreeRow title="Home" icon={<HomeIcon />} />
                <TreeRow title="OneDrive" icon={<OneDriveIcon />} arrow="right" />
                <TreeDivider />
                {quickAccess.map((item) => <TreeRow key={item.title} {...item} />)}
                <TreeDivider />
                <TreeRow title="My Computer" icon={<ComputerIcon />} arrow="down" />
                <TreeRow title="Local Disk (C:)" icon={<DiskIcon />} arrow="right" nested selected />
                <TreeRow title="Network" icon={<NetworkIcon />} arrow="right" />
            </Sidebar>
        </Body>
        <StatusBar>
            7 items
            <StatusDivider />
            <ViewButton $active aria-label="Details view"><ListViewIcon /></ViewButton>
            <ViewButton aria-label="Large icons view"><LargeViewIcon /></ViewButton>
        </StatusBar>
    </Explorer>
)

const StartPanel = () => (
    <Panel>
        <SearchBox>
            <SearchGlyph />
            <input type="text" defaultValue="L" aria-label="Search" />
        </SearchBox>
        <Filters>
            <ChatPill><BingIcon size={18} />Chat</ChatPill>
            <ActivePill>All</ActivePill>
            {filters.map((name) => <Pill key={name}>{name}</Pill>)}
            <FilterTools>
                <IconButton $width={64} $color="#111111" aria-label="More filters">
                    <svg width="10" height="12" viewBox="0 0 10 12"><path d="M1 .500v11L9.500 6z" fill="currentColor" stroke="currentColor" strokeLinejoin="round" /></svg>
                </IconButton>
                <IconButton $width={44} $color="#222222" aria-label="Options">
                    <svg width="14" height="4" viewBox="0 0 14 4" fill="currentColor">
                        <circle cx="2" cy="2" r="1.4" />
                        <circle cx="7" cy="2" r="1.4" />
                        <circle cx="12" cy="2" r="1.4" />
                    </svg>
                </IconButton>
                <IconButton $width={34} aria-label="Bing"><BingIcon size={30} /></IconButton>
            </FilterTools>
        </Filters>
        <Results>
            <Column>
                <Heading>Best match</Heading>
                <BestMatch>
                    <Accent />
                    <GearIcon size={24} />
                    <BestText>
                        Settings
                        <Muted>App</Muted>
                    </BestText>
                </BestMatch>
                {groups.map(({ title, rows }) => (
                    <React.Fragment key={title}>
                        <Heading>{title}</Heading>
                        {rows.map((row) => (
                            <Row key={row.title} $hover={row.hover}>
                                <RowMain>{row.icon}<span>{row.label || row.title}</span></RowMain>
                                <RowMore $hover={row.hover} aria-label={`More about ${row.title}`}>
                                    <ChevronRight size={15} strokeWidth={2.5} />
                                </RowMore>
                            </Row>
                        ))}
                    </React.Fragment>
                ))}
            </Column>
            <Preview>
                <PreviewHead>
                    <GearIcon size={64} />
                    <PreviewTitle>Settings</PreviewTitle>
                    <Muted>App</Muted>
                </PreviewHead>
                <Actions>
                    {actions.map(({ title, icon }) => (
                        <Action key={title}>{icon}{title}</Action>
                    ))}
                </Actions>
            </Preview>
        </Results>
    </Panel>
)

const TaskbarRow = () => (
    <Taskbar>
        <TaskItems>
            <StartButton aria-label="Start"><WindowsLogo /></StartButton>
            <TaskSearch><Search size={15} strokeWidth={2.5} />Search</TaskSearch>
            {taskApps.map(({ title, icon, mark }) => (
                <TaskButton key={title} aria-label={title} $mark={mark}>{icon}</TaskButton>
            ))}
        </TaskItems>
        <Tray>
            <TrayButton aria-label="Hidden icons"><ChevronUp size={16} /></TrayButton>
            <TrayButton aria-label="OneDrive"><CloudOffIcon /></TrayButton>
            <TrayButton aria-label="Network"><MonitorIcon /></TrayButton>
            <TrayButton $width={16} aria-label="Volume"><SpeakerIcon /></TrayButton>
            <Clock>6:20 AM<br />7/16/2023</Clock>
        </Tray>
    </Taskbar>
)

const App = () => {
    return (
        <>
            <GlobalStyle />
            <Desktop>
                <ExplorerWindow />
                <TaskbarRow />
                <StartPanel />
                <Pointer width="12" height="19" viewBox="0 0 12 19">
                    <path d="M1 1v14l3.300-3 2.300 5.500 2.300-1L6.600 11h4.700z" fill="#fff" stroke="#111" />
                </Pointer>
            </Desktop>
        </>
    )
}

export default App
